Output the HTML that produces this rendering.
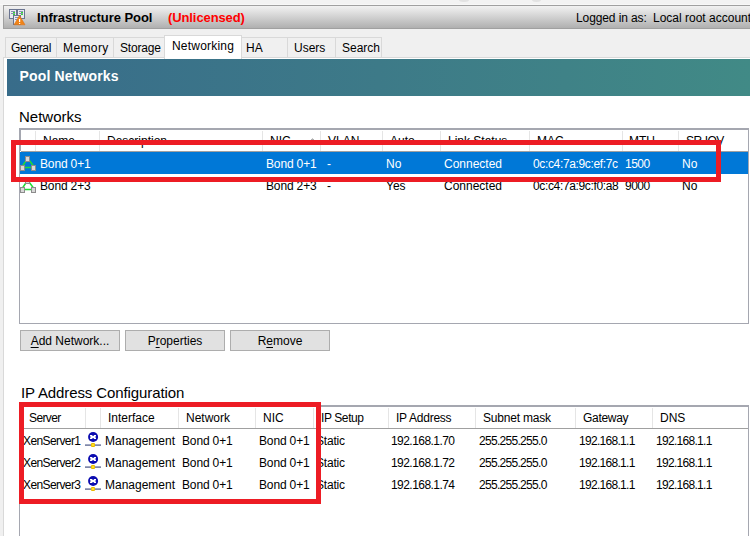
<!DOCTYPE html>
<html><head><meta charset="utf-8">
<style>
*{margin:0;padding:0;box-sizing:border-box}
html,body{width:750px;height:536px;overflow:hidden;background:#f0f0f0;font-family:"Liberation Sans",sans-serif;font-size:12px;color:#000}
.a{position:absolute;white-space:nowrap}
.t{position:absolute;white-space:nowrap;line-height:14px}
#title{left:3px;top:5px;width:747px;height:24px;border-top:1px solid #a0a0a0;border-bottom:1px solid #a0a0a0;border-left:1px solid #a0a0a0;background:linear-gradient(#f2f2f2,#b0b0b0)}
.tab{position:absolute;top:37px;height:21px;border:1px solid #d9d9d9;border-bottom:none;background:#f0f0f0}
#panel{left:3px;top:57px;width:747px;height:479px;background:#fff;border-left:1px solid #d9d9d9;border-top:1px solid #d9d9d9}
#hdr{left:7px;top:59px;width:743px;height:37px;background:linear-gradient(to right,#386c8a,#3d7a88 50%,#418a86)}
.list{position:absolute;background:#fff;border:1px solid #a5a7b0}
.sep{position:absolute;width:1px;background:#e5e5e5}
.hline{position:absolute;height:1px;background:#a0a0a0}
.btn{position:absolute;top:330px;width:100px;height:21px;background:#e1e1e1;border:1px solid #adadad;text-align:center;line-height:20px}
.red{position:absolute;border:5px solid #ed1c24}
u{text-decoration:underline;text-underline-offset:2px}
</style></head><body>

<div class="a" style="left:0;top:0;width:750px;height:4px;background:#f3f3f3"></div>
<div class="a" style="left:0;top:4px;width:750px;height:1px;background:#f8f8f8"></div>
<div class="a" style="left:459px;top:-3px;width:10px;height:4.5px;border-radius:50%;background:#e2e2e2;filter:blur(0.6px)"></div>
<div class="a" style="left:532px;top:-3px;width:9px;height:4.5px;border-radius:50%;background:#e2e2e2;filter:blur(0.6px)"></div>
<div class="a" id="title"></div>
<svg class="a" style="left:9px;top:9px" width="17" height="17" viewBox="0 0 17 17">
  <rect x="0.5" y="0.5" width="7" height="9" fill="#e8eaf0" stroke="#6a7490"/>
  <rect x="8.5" y="0.5" width="7" height="9" fill="#e8eaf0" stroke="#6a7490"/>
  <rect x="2" y="2" width="4" height="1" fill="#8890b0"/><rect x="10" y="2" width="4" height="1" fill="#8890b0"/>
  <rect x="4" y="3" width="2" height="1" fill="#30e030"/><rect x="12" y="3" width="2" height="1" fill="#30e030"/>
  <rect x="2" y="4" width="4" height="1" fill="#8890b0"/><rect x="10" y="4" width="4" height="1" fill="#8890b0"/>
  <rect x="4" y="5" width="2" height="1" fill="#30e030"/><rect x="12" y="5" width="2" height="1" fill="#30e030"/>
  <rect x="4.5" y="6.5" width="7" height="9" fill="#e8eaf0" stroke="#6a7490"/>
  <rect x="6" y="8" width="4" height="1" fill="#8890b0"/><rect x="6" y="10" width="4" height="1" fill="#8890b0"/>
  <path d="M10.5 6.5 L16 15.8 L5 15.8 Z" fill="#f08418" stroke="#e07010" stroke-width="0.6"/>
  <rect x="10" y="10" width="1.2" height="3" fill="#fff"/><rect x="10" y="14" width="1.2" height="1" fill="#fff"/>
</svg>
<div class="t" style="left:37px;top:11px;font-weight:bold;font-size:13px;letter-spacing:-0.05px">Infrastructure Pool</div>
<div class="t" style="left:168px;top:11px;font-weight:bold;font-size:13px;color:#ff0000;letter-spacing:-0.1px">(Unlicensed)</div>
<div class="t" style="left:576px;top:10.5px;letter-spacing:-0.1px">Logged in as:</div>
<div class="t" style="left:653px;top:10.5px">Local root account</div>

<div class="tab" style="left:5px;width:52px;"></div>
<div class="tab" style="left:56px;width:58px;"></div>
<div class="tab" style="left:113px;width:52px;"></div>
<div class="tab" style="left:241px;width:47px;border-left:none;"></div>
<div class="tab" style="left:287px;width:49px;"></div>
<div class="tab" style="left:335px;width:47px;"></div>
<div class="t" style="left:11px;top:41px;letter-spacing:-0.4px">General</div>
<div class="t" style="left:63px;top:41px;letter-spacing:0.4px">Memory</div>
<div class="t" style="left:120px;top:41px;letter-spacing:-0.2px">Storage</div>
<div class="t" style="left:246px;top:41px;letter-spacing:0px">HA</div>
<div class="t" style="left:294px;top:41px;letter-spacing:0px">Users</div>
<div class="t" style="left:342px;top:41px;letter-spacing:0px">Search</div>
<div class="a" id="panel"></div>
<div class="a" style="left:164px;top:35px;width:78px;height:24px;background:#fff;border:1px solid #d9d9d9;border-bottom:none"></div>
<div class="t" style="left:172px;top:39px;letter-spacing:0.2px">Networking</div>
<div class="a" id="hdr"></div>
<div class="t" style="left:19.5px;top:69px;font-weight:bold;font-size:14px;color:#fff;letter-spacing:0.15px">Pool Networks</div>
<div class="t" style="left:19px;top:108px;font-size:15px;line-height:17px">Networks</div>

<div class="list" style="left:19px;top:128px;width:730px;height:196px"></div>
<div class="a" style="left:20px;top:129px;width:728px;height:1px;background:#a5a7b0"></div>
<div class="a" style="left:20px;top:129px;width:1px;height:22px;background:#a5a7b0"></div>
<div class="hline" style="left:21px;top:151px;width:727px;background:#a0a0a0"></div>
<div class="sep" style="left:35px;top:131px;height:20px"></div>
<div class="sep" style="left:99px;top:131px;height:20px"></div>
<div class="sep" style="left:262px;top:131px;height:20px"></div>
<div class="sep" style="left:320px;top:131px;height:20px"></div>
<div class="sep" style="left:382px;top:131px;height:20px"></div>
<div class="sep" style="left:440px;top:131px;height:20px"></div>
<div class="sep" style="left:529px;top:131px;height:20px"></div>
<div class="sep" style="left:622px;top:131px;height:20px"></div>
<div class="sep" style="left:678px;top:131px;height:20px"></div>
<div class="t" style="left:43px;top:134px;letter-spacing:0px">Name</div>
<div class="t" style="left:107px;top:134px;letter-spacing:0px">Description</div>
<div class="t" style="left:270px;top:134px;letter-spacing:0px">NIC</div>
<div class="t" style="left:328px;top:134px;letter-spacing:0px">VLAN</div>
<div class="t" style="left:390px;top:134px;letter-spacing:0px">Auto</div>
<div class="t" style="left:448px;top:134px;letter-spacing:0px">Link Status</div>
<div class="t" style="left:537px;top:134px;letter-spacing:0px">MAC</div>
<div class="t" style="left:629px;top:134px;letter-spacing:0px">MTU</div>
<div class="t" style="left:686px;top:134px;letter-spacing:-0.6px">SR-IOV</div>
<div class="a" style="left:20px;top:152px;width:728px;height:22px;background:#0078d7"></div>
<div class="a" style="left:311px;top:139px;width:3px;height:1px;background:#b0b0b0"></div><div class="a" style="left:312px;top:138px;width:1px;height:1px;background:#c8c8c8"></div>
<svg class="a" style="left:20px;top:156px" width="17" height="16" viewBox="0 0 17 16">
<path d="M6.5 4 L2.5 10 M9 4 L13.5 10 M4 11.5 H12" stroke="#22dd33" stroke-width="1.5" fill="none"/>
<rect x="5.5" y="0.5" width="4" height="5" fill="#d8d8d8" stroke="#8c8c8c"/>
<rect x="0.5" y="9.5" width="4" height="5" fill="#d8d8d8" stroke="#8c8c8c"/>
<rect x="11.5" y="9.5" width="4" height="5" fill="#d8d8d8" stroke="#8c8c8c"/>
</svg>
<svg class="a" style="left:20px;top:178px" width="17" height="16" viewBox="0 0 17 16">
<path d="M6.5 4 L2.5 10 M9 4 L13.5 10 M4 11.5 H12" stroke="#22dd33" stroke-width="1.5" fill="none"/>
<rect x="5.5" y="0.5" width="4" height="5" fill="#d8d8d8" stroke="#8c8c8c"/>
<rect x="0.5" y="9.5" width="4" height="5" fill="#d8d8d8" stroke="#8c8c8c"/>
<rect x="11.5" y="9.5" width="4" height="5" fill="#d8d8d8" stroke="#8c8c8c"/>
</svg>
<div class="t" style="left:40px;top:157px;color:#fff;letter-spacing:-0.15px">Bond 0+1</div>
<div class="t" style="left:266px;top:157px;color:#fff;letter-spacing:-0.15px">Bond 0+1</div>
<div class="t" style="left:327px;top:157px;color:#fff;letter-spacing:0px">-</div>
<div class="t" style="left:386px;top:157px;color:#fff;letter-spacing:0px">No</div>
<div class="t" style="left:444px;top:157px;color:#fff;letter-spacing:0px">Connected</div>
<div class="t" style="left:533px;top:157px;color:#fff;letter-spacing:-0.35px">0c:c4:7a:9c:ef:7c</div>
<div class="t" style="left:625px;top:157px;color:#fff;letter-spacing:-0.5px">1500</div>
<div class="t" style="left:682px;top:157px;color:#fff;letter-spacing:0px">No</div>
<div class="t" style="left:40px;top:179px;color:#000;letter-spacing:-0.15px">Bond 2+3</div>
<div class="t" style="left:266px;top:179px;color:#000;letter-spacing:-0.15px">Bond 2+3</div>
<div class="t" style="left:327px;top:179px;color:#000;letter-spacing:0px">-</div>
<div class="t" style="left:386px;top:179px;color:#000;letter-spacing:0px">Yes</div>
<div class="t" style="left:444px;top:179px;color:#000;letter-spacing:0px">Connected</div>
<div class="t" style="left:533px;top:179px;color:#000;letter-spacing:-0.35px">0c:c4:7a:9c:f0:a8</div>
<div class="t" style="left:625px;top:179px;color:#000;letter-spacing:-0.5px">9000</div>
<div class="t" style="left:682px;top:179px;color:#000;letter-spacing:0px">No</div>
<div class="btn" style="left:20px"><u>A</u>dd Network...</div>
<div class="btn" style="left:125px">P<u>r</u>operties</div>
<div class="btn" style="left:230px">R<u>e</u>move</div>
<div class="t" style="left:21px;top:383.5px;font-size:15px;line-height:17px;letter-spacing:-0.1px">IP Address Configuration</div>
<div class="list" style="left:19px;top:405px;width:730px;height:140px"></div>
<div class="a" style="left:20px;top:406px;width:728px;height:1px;background:#a5a7b0"></div>
<div class="a" style="left:20px;top:406px;width:1px;height:22px;background:#a5a7b0"></div>
<div class="hline" style="left:20px;top:428px;width:728px;background:#a0a0a0"></div>

<div class="sep" style="left:85px;top:408px;height:20px"></div>
<div class="sep" style="left:100px;top:408px;height:20px"></div>
<div class="sep" style="left:178px;top:408px;height:20px"></div>
<div class="sep" style="left:255px;top:408px;height:20px"></div>
<div class="sep" style="left:313px;top:408px;height:20px"></div>
<div class="sep" style="left:388px;top:408px;height:20px"></div>
<div class="sep" style="left:475px;top:408px;height:20px"></div>
<div class="sep" style="left:575px;top:408px;height:20px"></div>
<div class="sep" style="left:652px;top:408px;height:20px"></div>
<div class="t" style="left:29px;top:411px;letter-spacing:-0.6px">Server</div>
<div class="t" style="left:108px;top:411px;letter-spacing:0px">Interface</div>
<div class="t" style="left:186px;top:411px;letter-spacing:0px">Network</div>
<div class="t" style="left:263px;top:411px;letter-spacing:0px">NIC</div>
<div class="t" style="left:321px;top:411px;letter-spacing:-0.4px">IP Setup</div>
<div class="t" style="left:396px;top:411px;letter-spacing:-0.25px">IP Address</div>
<div class="t" style="left:483px;top:411px;letter-spacing:-0.2px">Subnet mask</div>
<div class="t" style="left:583px;top:411px;letter-spacing:-0.3px">Gateway</div>
<div class="t" style="left:660px;top:411px;letter-spacing:0px">DNS</div>
<svg class="a" style="left:85px;top:432px" width="17" height="16" viewBox="0 0 17 16">
<rect x="0" y="12" width="16" height="2" fill="#8088a8"/>
<rect x="0" y="12" width="16" height="0.8" fill="#a8b0c8"/>
<rect x="6" y="11" width="4" height="4" rx="1" fill="#e8b800"/>
<rect x="6.8" y="12" width="2.4" height="2" fill="#ffe020"/>
<circle cx="8.1" cy="5" r="5" fill="#0c0cb0"/>
<path d="M5 3 H7.2 V3.8 H9 V3 H11 V4.6 H10.2 V5.6 H11 V7 H9 V6.3 H7.2 V7 H5 V5.6 H5.8 V4.6 H5 Z" fill="#fff"/>
</svg>
<div class="t" style="left:23px;top:434px;letter-spacing:-0.6px">XenServer1</div>
<div class="t" style="left:105px;top:434px;letter-spacing:0px">Management</div>
<div class="t" style="left:182px;top:434px;letter-spacing:-0.15px">Bond 0+1</div>
<div class="t" style="left:259px;top:434px;letter-spacing:-0.15px">Bond 0+1</div>
<div class="t" style="left:316px;top:434px;letter-spacing:-0.2px">Static</div>
<div class="t" style="left:391px;top:434px;letter-spacing:-0.55px">192.168.1.70</div>
<div class="t" style="left:479px;top:434px;letter-spacing:-0.7px">255.255.255.0</div>
<div class="t" style="left:579px;top:434px;letter-spacing:-0.7px">192.168.1.1</div>
<div class="t" style="left:656px;top:434px;letter-spacing:-0.7px">192.168.1.1</div>
<svg class="a" style="left:85px;top:454px" width="17" height="16" viewBox="0 0 17 16">
<rect x="0" y="12" width="16" height="2" fill="#8088a8"/>
<rect x="0" y="12" width="16" height="0.8" fill="#a8b0c8"/>
<rect x="6" y="11" width="4" height="4" rx="1" fill="#e8b800"/>
<rect x="6.8" y="12" width="2.4" height="2" fill="#ffe020"/>
<circle cx="8.1" cy="5" r="5" fill="#0c0cb0"/>
<path d="M5 3 H7.2 V3.8 H9 V3 H11 V4.6 H10.2 V5.6 H11 V7 H9 V6.3 H7.2 V7 H5 V5.6 H5.8 V4.6 H5 Z" fill="#fff"/>
</svg>
<div class="t" style="left:23px;top:456px;letter-spacing:-0.6px">XenServer2</div>
<div class="t" style="left:105px;top:456px;letter-spacing:0px">Management</div>
<div class="t" style="left:182px;top:456px;letter-spacing:-0.15px">Bond 0+1</div>
<div class="t" style="left:259px;top:456px;letter-spacing:-0.15px">Bond 0+1</div>
<div class="t" style="left:316px;top:456px;letter-spacing:-0.2px">Static</div>
<div class="t" style="left:391px;top:456px;letter-spacing:-0.55px">192.168.1.72</div>
<div class="t" style="left:479px;top:456px;letter-spacing:-0.7px">255.255.255.0</div>
<div class="t" style="left:579px;top:456px;letter-spacing:-0.7px">192.168.1.1</div>
<div class="t" style="left:656px;top:456px;letter-spacing:-0.7px">192.168.1.1</div>
<svg class="a" style="left:85px;top:476px" width="17" height="16" viewBox="0 0 17 16">
<rect x="0" y="12" width="16" height="2" fill="#8088a8"/>
<rect x="0" y="12" width="16" height="0.8" fill="#a8b0c8"/>
<rect x="6" y="11" width="4" height="4" rx="1" fill="#e8b800"/>
<rect x="6.8" y="12" width="2.4" height="2" fill="#ffe020"/>
<circle cx="8.1" cy="5" r="5" fill="#0c0cb0"/>
<path d="M5 3 H7.2 V3.8 H9 V3 H11 V4.6 H10.2 V5.6 H11 V7 H9 V6.3 H7.2 V7 H5 V5.6 H5.8 V4.6 H5 Z" fill="#fff"/>
</svg>
<div class="t" style="left:23px;top:478px;letter-spacing:-0.6px">XenServer3</div>
<div class="t" style="left:105px;top:478px;letter-spacing:0px">Management</div>
<div class="t" style="left:182px;top:478px;letter-spacing:-0.15px">Bond 0+1</div>
<div class="t" style="left:259px;top:478px;letter-spacing:-0.15px">Bond 0+1</div>
<div class="t" style="left:316px;top:478px;letter-spacing:-0.2px">Static</div>
<div class="t" style="left:391px;top:478px;letter-spacing:-0.55px">192.168.1.74</div>
<div class="t" style="left:479px;top:478px;letter-spacing:-0.7px">255.255.255.0</div>
<div class="t" style="left:579px;top:478px;letter-spacing:-0.7px">192.168.1.1</div>
<div class="t" style="left:656px;top:478px;letter-spacing:-0.7px">192.168.1.1</div>
<div class="red" style="left:11px;top:140px;width:710px;height:42px"></div>
<div class="red" style="left:19px;top:402px;width:302px;height:102px"></div>
</body></html>
